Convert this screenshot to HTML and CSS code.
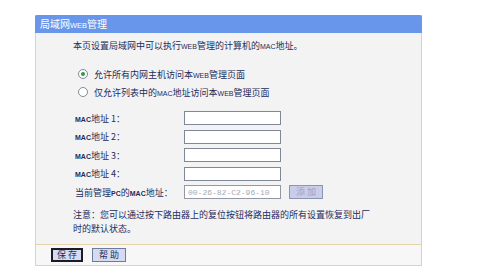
FILE: index.html
```html
<!DOCTYPE html>
<html lang="zh-CN">

<head>
  <meta charset="UTF-8" />
  <title>局域网WEB管理</title>
  <link rel="stylesheet" href="styles.css">
</head>

<body>
  <div class="panel">
    <div class="panel-title">局域网<span class="en">WEB</span>管理</div>

    <div class="panel-body">
      <p class="intro">本页设置局域网中可以执行<span class="en">WEB</span>管理的计算机的<span class="en">MAC</span>地址。</p>

      <div class="radios">
        <label class="radio-row">
          <input type="radio" name="mode" checked />
          <span>允许所有内网主机访问本<span class="en">WEB</span>管理页面</span>
        </label>
        <label class="radio-row">
          <input type="radio" name="mode" />
          <span>仅允许列表中的<span class="en">MAC</span>地址访问本<span class="en">WEB</span>管理页面</span>
        </label>
      </div>

      <div class="mac-form">
        <span class="label"><b class="en">MAC</b>地址 1：</span>
        <input type="text" class="mac-input" />
        <span></span>

        <span class="label"><b class="en">MAC</b>地址 2：</span>
        <input type="text" class="mac-input" />
        <span></span>

        <span class="label"><b class="en">MAC</b>地址 3：</span>
        <input type="text" class="mac-input" />
        <span></span>

        <span class="label"><b class="en">MAC</b>地址 4：</span>
        <input type="text" class="mac-input" />
        <span></span>

        <span class="label">当前管理<b class="en">PC</b>的<b class="en">MAC</b>地址：</span>
        <input type="text" class="mac-input" value="00-26-82-C2-96-10" disabled />
        <button class="btn btn-add" disabled>添 加</button>
      </div>

      <p class="note">注意：您可以通过按下路由器上的复位按钮将路由器的所有设置恢复到出厂<br />时的默认状态。</p>
    </div>

    <div class="panel-footer">
      <button class="btn btn-save">保 存</button>
      <button class="btn">帮 助</button>
    </div>
  </div>
</body>

</html>
```

FILE: styles.css
```css
body {
  margin: 0;
  background: #fff;
  font-family: "Noto Sans CJK SC", "Liberation Sans", sans-serif;
  font-size: 9px;
  color: #1d2c5a;
}

.en {
  font-family: "Liberation Sans", sans-serif;
  font-size: 7px;
}

.panel {
  width: 387px;
  margin: 15px 0 0 35px;
  border: 1px solid #e3d3ab;
  border-top: none;
  box-sizing: border-box;
}

.panel-title {
  height: 18px;
  line-height: 18px;
  padding-left: 5px;
  background: #6896ea;
  color: #fff;
  font-size: 10px;
  border-radius: 2px 2px 0 0;
  margin: 0 -1px;
}

.panel-title .en {
  font-size: 7.5px;
}

.panel-body {
  background: #f3f3f4;
  padding: 7px 0 8px 37px;
}

.intro {
  margin: 0;
  line-height: 12px;
}

.radios {
  margin: 12px 0 0 5px;
  display: flex;
  flex-direction: column;
}

.radio-row {
  display: flex;
  align-items: center;
  height: 18px;
  gap: 6px;
}

.radio-row input {
  appearance: none;
  width: 10px;
  height: 10px;
  margin: 0;
  border: 1px solid #7d8c9c;
  border-radius: 50%;
  background: #fff;
  box-sizing: border-box;
  display: grid;
  place-items: center;
}

.radio-row input:checked::after {
  content: "";
  width: 4px;
  height: 4px;
  border-radius: 50%;
  background: #2f9a3c;
}

.mac-form {
  margin: 10px 0 0 2px;
  display: grid;
  grid-template-columns: 101px 97px 34px;
  grid-auto-rows: 14px;
  row-gap: 4.6px;
  column-gap: 8px;
  align-items: center;
}

.label {
  white-space: pre;
}

.label b {
  font-weight: bold;
}

.mac-input {
  height: 14px;
  width: 97px;
  margin: 0;
  padding: 0 3px;
  box-sizing: border-box;
  border: 1px solid #7e8898;
  background: #fff;
  font-family: "Liberation Mono", monospace;
  font-size: 8px;
}

.mac-input:disabled {
  color: #a6a9b4;
  border-color: #9298a6;
}

.note {
  margin: 9px 0 0;
  line-height: 14px;
}

.panel-footer {
  border-top: 1px solid #e3d3ab;
  background: #f7f7f8;
  padding: 3px 0 3px 15px;
  display: flex;
  gap: 9px;
}

.btn {
  height: 14px;
  width: 34px;
  padding: 0;
  border: 1px solid #6e7c9c;
  background: #d6dbf1;
  color: #1d2c5a;
  font-family: "Noto Sans CJK SC", sans-serif;
  font-size: 9px;
  line-height: 12px;
}

.btn-save {
  width: 32px;
  border: 2px solid #1a1c28;
  line-height: 10px;
}

.btn-add {
  background: #c9cde9;
  border-color: #8d93b3;
  color: #9ba2c4;
}
```
